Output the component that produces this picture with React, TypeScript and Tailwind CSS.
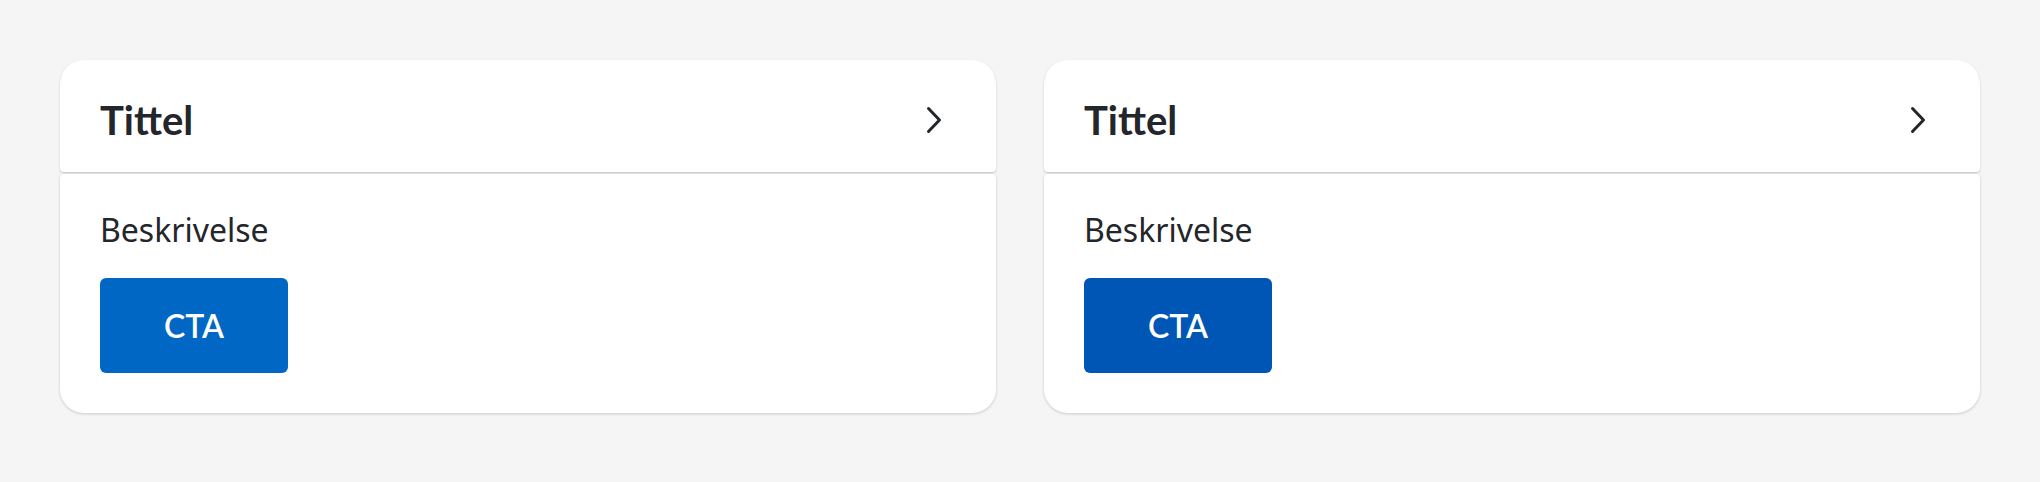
interface CardProps {
  ctaClass: string;
}

function LinkCard({ ctaClass }: CardProps) {
  return (
    <div className="flex flex-col w-[936px]">
      <div className="flex items-center justify-between h-[112px] pl-10 pr-10 pt-[8px] bg-white rounded-t-[24px] rounded-b-[4px] shadow-[0_1px_2px_rgba(0,0,0,0.22)]">
        <span className="text-[40px] leading-[48px] font-bold text-[#23262a]">Tittel</span>
        <svg width="32" height="32" viewBox="0 0 32 32" fill="none" className="shrink-0">
          <path d="M4.5 4.5 L15.5 16 L4.5 27.5" stroke="#23262a" strokeWidth="3" strokeLinecap="round" strokeLinejoin="round" />
        </svg>
      </div>
      <div className="mt-[2px] flex flex-col items-start px-10 pt-9 pb-10 bg-white rounded-t-[4px] rounded-b-[24px] shadow-[0_1px_3px_rgba(0,0,0,0.18)]">
        <p className="font-['Noto_Sans',sans-serif] text-[32px] leading-[40px] text-[#23262a]">Beskrivelse</p>
        <button className={`mt-7 w-[188px] h-[95px] rounded-[6px] text-white text-[32px] font-semibold ${ctaClass}`}>
          CTA
        </button>
      </div>
    </div>
  );
}

export default function App() {
  return (
    <div className="w-[2040px] h-[482px] bg-[#f5f5f5] flex gap-12 p-[60px]" style={{ fontFamily: 'Lato, "Noto Sans", sans-serif' }}>
      <LinkCard ctaClass="bg-[#0067c5]" />
      <LinkCard ctaClass="bg-[#0056b4]" />
    </div>
  );
}
